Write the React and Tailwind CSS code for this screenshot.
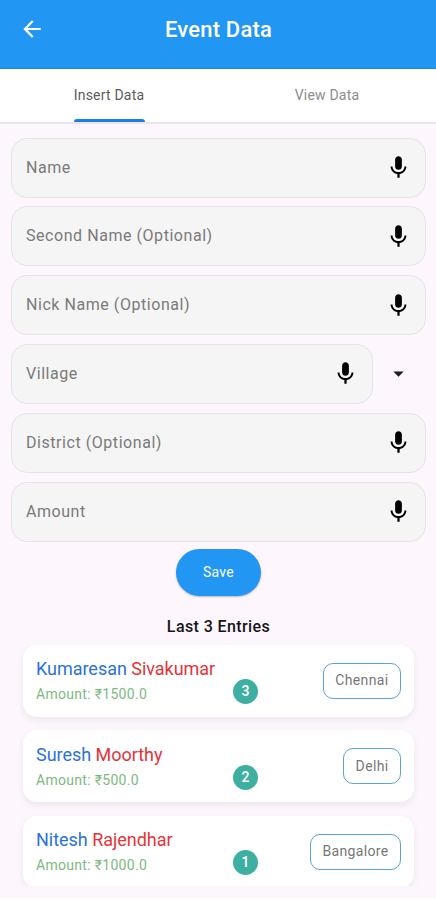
import React, { useState } from "react";
import { MdArrowBack, MdArrowDropDown } from "react-icons/md";

const entries = [
  { id: 3, first: "Kumaresan", last: "Sivakumar", amount: "1500.0", place: "Chennai" },
  { id: 2, first: "Suresh", last: "Moorthy", amount: "500.0", place: "Delhi" },
  { id: 1, first: "Nitesh", last: "Rajendhar", amount: "1000.0", place: "Bangalore" },
];

const MicIcon = () => (
  <svg viewBox="0 0 24 24" className="h-[27px] w-[27px] shrink-0 fill-black">
    <path d="M12 14c1.66 0 2.99-1.34 2.99-3L15 5c0-1.66-1.34-3-3-3S9 3.34 9 5v6c0 1.66 1.34 3 3 3zm5.3-3c0 3-2.54 5.1-5.3 5.1S6.7 14 6.7 11H5c0 3.41 2.72 6.23 6 6.72V21h2v-3.28c3.28-.48 6-3.3 6-6.72h-1.7z" />
  </svg>
);

const Field = ({ label }) => (
  <div className="flex h-[60px] w-full min-w-0 items-center justify-between rounded-[16px] border border-[#e6e2e8] bg-[#f5f5f5] pr-[13px] pl-[14px]">
    <input
      type="text"
      placeholder={label}
      className="min-w-0 flex-1 bg-transparent text-[16px] tracking-[0.55px] outline-none placeholder:text-[#7a7a7a]"
    />
    <button>
      <MicIcon />
    </button>
  </div>
);

const EntryCard = ({ entry }) => (
  <div className="flex h-[72px] shrink-0 items-center justify-between rounded-[14px] bg-white pr-[13px] pl-[13px] shadow-[0_3px_7px_rgba(0,0,0,0.07)]">
    <div className="flex w-[222px] items-end justify-between">
      <div>
        <p className="text-[18px] leading-[24px] tracking-[-0.03px] whitespace-nowrap">
          <span className="text-[#2a72dc]">{entry.first}</span>{" "}
          <span className="text-[#e53338]">{entry.last}</span>
        </p>
        <p className="mt-[3px] text-[14px] leading-[20px] tracking-[0.3px] text-[#7dba80]">
          Amount: ₹{entry.amount}
        </p>
      </div>
      <span className="-ml-6 flex h-[25px] w-[25px] shrink-0 items-center justify-center rounded-full bg-[#3fafa1] text-[14px] font-medium text-white">
        {entry.id}
      </span>
    </div>
    <span className="flex h-[36px] items-center rounded-[10px] border border-[#5ba3dc] px-[11.5px] text-[14px] tracking-[0.35px] text-[#777]">
      {entry.place}
    </span>
  </div>
);

const App = () => {
  const [tab, setTab] = useState("insert");

  return (
    <div className="flex h-[900px] w-full flex-col overflow-hidden border-b-2 border-white bg-[#fdf6fd] font-['Roboto',sans-serif]">
      <header className="grid h-[69px] shrink-0 grid-cols-[64px_1fr_64px] items-center border-b border-[#1b87dd] bg-[#2196f3] pb-[10px] text-white">
        <button className="pl-[19px]">
          <MdArrowBack size={26} />
        </button>
        <h1 className="pl-px text-center text-[22px] font-medium tracking-[0.2px]">Event Data</h1>
      </header>

      <nav className="grid h-[55px] shrink-0 grid-cols-2 border-b-2 border-[#e9e5ea] bg-white text-[14px] tracking-[0.2px]">
        <button onClick={() => setTab("insert")} className="flex flex-col items-center text-[#5c5c5c]">
          <span className="flex h-[50px] items-center pt-[3px]">Insert Data</span>
          {tab === "insert" && <span className="h-[3px] w-[71px] rounded-t-[3px] bg-[#1c7bf0]" />}
        </button>
        <button onClick={() => setTab("view")} className="flex flex-col items-center text-[#8c8c8c]">
          <span className="flex h-[50px] items-center pt-[3px]">View Data</span>
          {tab === "view" && <span className="h-[3px] w-[71px] rounded-t-[3px] bg-[#1c7bf0]" />}
        </button>
      </nav>

      <main className="flex flex-col items-center pt-[13.6px] pr-[10px] pl-[11px]">
        <div className="flex w-full flex-col gap-[8.8px]">
          <Field label="Name" />
          <Field label="Second Name (Optional)" />
          <Field label="Nick Name (Optional)" />
          <div className="flex items-center">
            <Field label="Village" />
            <button className="flex w-[53.5px] shrink-0 justify-center pr-px">
              <MdArrowDropDown size={25} className="text-[#1d1b20]" />
            </button>
          </div>
          <Field label="District (Optional)" />
          <Field label="Amount" />
        </div>

        <button className="mt-[7.4px] h-[47px] w-[85px] shrink-0 rounded-full bg-[#2196f3] pt-px text-[14px] tracking-[0.3px] text-white shadow-[0_1px_2px_rgba(0,0,0,0.25)]">
          Save
        </button>

        <h2 className="mt-[20px] text-[16px] leading-[22px] font-medium tracking-[0.4px] text-[#161418]">
          Last 3 Entries
        </h2>

        <div className="mt-[7px] flex h-[241px] w-full shrink-0 flex-col gap-[13.3px] overflow-hidden px-3">
          {entries.map((entry) => (
            <EntryCard key={entry.id} entry={entry} />
          ))}
        </div>
      </main>
    </div>
  );
};

export default App;
